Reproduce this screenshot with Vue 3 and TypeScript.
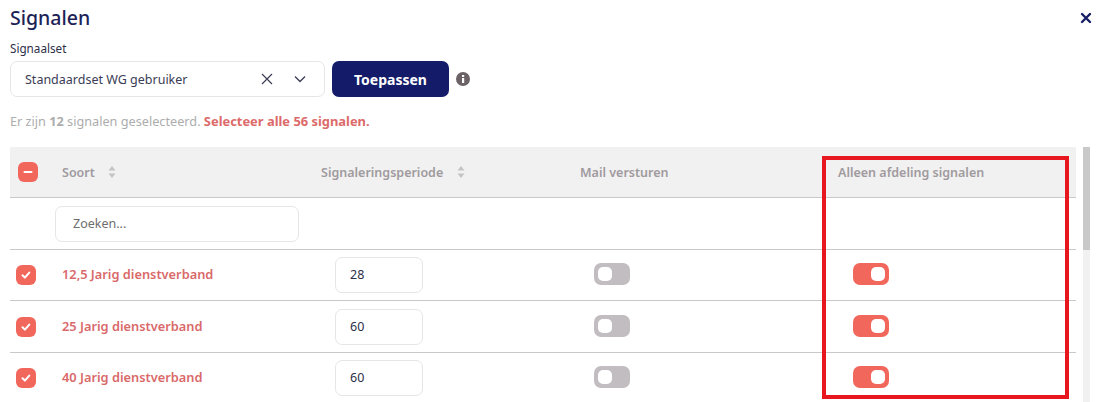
<script setup lang="ts">
interface Row { name: string; days: string }
const rows: Row[] = [
  { name: '12,5 Jarig dienstverband', days: '28' },
  { name: '25 Jarig dienstverband', days: '60' },
  { name: '40 Jarig dienstverband', days: '60' },
]
</script>

<template>
  <div class="page">
    <header class="top">
      <h1>Signalen</h1>
      <svg class="close" width="12" height="12" viewBox="0 0 12 12"><path d="M2 2l8 8M10 2l-8 8" stroke="#161f63" stroke-width="2.4" stroke-linecap="round" /></svg>
    </header>
    <div class="label">Signaalset</div>
    <div class="setrow">
      <div class="select">
        <span class="value">Standaardset WG gebruiker</span>
        <svg class="x" width="12" height="12" viewBox="0 0 12 12"><path d="M1 1l10 10M11 1L1 11" stroke="#3a3d55" stroke-width="1.2" /></svg>
        <svg class="chev" width="12" height="8" viewBox="0 0 12 8"><path d="M1 1.5l5 5 5-5" fill="none" stroke="#3a3d55" stroke-width="1.3" /></svg>
      </div>
      <button class="apply">Toepassen</button>
      <svg class="info" width="14" height="14" viewBox="0 0 14 14"><circle cx="7" cy="7" r="7" fill="#6b6266" /><rect x="6" y="6" width="2.2" height="5" fill="#fff" /><rect x="6" y="3" width="2.2" height="2" fill="#fff" /></svg>
    </div>
    <p class="count">Er zijn <b>12</b> signalen geselecteerd. <a>Selecteer alle 56 signalen.</a></p>

    <div class="tablewrap">
      <div class="table">
        <div class="row head">
          <div class="c0"><span class="check"><svg width="12" height="12" viewBox="0 0 12 12"><path d="M2.5 6h7" stroke="#fff" stroke-width="2" stroke-linecap="round" /></svg></span></div>
          <div class="c1">Soort <svg class="sort" width="8" height="12" viewBox="0 0 8 12"><path d="M4 0l3.5 4.5h-7zM4 12L.5 7.5h7z" fill="#c4c4c4" /></svg></div>
          <div class="c2">Signaleringsperiode <svg class="sort" width="8" height="12" viewBox="0 0 8 12"><path d="M4 0l3.5 4.5h-7zM4 12L.5 7.5h7z" fill="#c4c4c4" /></svg></div>
          <div class="c3">Mail versturen</div>
          <div class="c4">Alleen afdeling signalen</div>
        </div>
        <div class="row search">
          <div class="c0"></div>
          <div class="searchbox">Zoeken...</div>
        </div>
        <div v-for="r in rows" :key="r.name" class="row item">
          <div class="c0"><span class="check"><svg width="12" height="12" viewBox="0 0 12 12"><path d="M2.5 6.2l2.4 2.4 4.4-5" fill="none" stroke="#fff" stroke-width="2" stroke-linecap="round" stroke-linejoin="round" /></svg></span></div>
          <div class="c1 name">{{ r.name }}</div>
          <div class="c2"><div class="num">{{ r.days }}</div></div>
          <div class="c3"><span class="toggle off"><i></i></span></div>
          <div class="c4"><span class="toggle on"><i></i></span></div>
        </div>
      </div>
      <div class="scroll"><div class="thumb"></div></div>
    </div>
    <div class="mark"></div>
  </div>
</template>

<style scoped>
.page {
  position: relative;
  width: 1097px;
  height: 402px;
  overflow: hidden;
  box-sizing: border-box;
  padding: 0 7px 0 10px;
  background: #fff;
  font-family: "Noto Sans", sans-serif;
  color: #161f63;
}
.top { display: flex; justify-content: space-between; align-items: center; height: 36px; margin-right: -2px; }
h1 { margin: 0; font-size: 19.5px; font-weight: 500; line-height: 36px; color: #1b2256; }
.label { font-size: 11.7px; line-height: 16px; margin-top: 4px; color: #2d2f48; }
.setrow { display: flex; align-items: center; margin-top: 5px; }
.select {
  width: 315px; height: 36px; box-sizing: border-box;
  border: 1px solid #e6e6e6; border-radius: 7px;
  display: flex; align-items: center; padding: 0 18px 0 14px;
  font-size: 12.5px; color: #3a3d55;
}
.value { flex: 1; }
.chev { margin-left: 21px; }
.apply {
  margin-left: 7px; width: 117px; height: 36px; border: 0; border-radius: 7px;
  background: #141c69; color: #fff; font: 700 14px "Noto Sans", sans-serif;
}
.info { margin-left: 7px; }
.count { margin: 15px 0 0; font-size: 12.7px; line-height: 18px; color: #adadad; }
.count b { font-weight: 700; }
.count a { font-weight: 700; font-size: 12.9px; color: #dc6a6a; }
.tablewrap { display: flex; margin-top: 17px; }
.table { width: 1066px; flex: none; }
.row { display: grid; grid-template-columns: 45px 255px 260px 258px 248px; align-items: center; border-bottom: 1px solid #c9c9c9; box-sizing: border-box; }
.head { height: 51px; background: #f1f1f1; font-size: 12.5px; font-weight: 600; color: #a09a9e; }
.search { height: 52px; }
.item { height: 51px; }
.item:nth-child(4) { height: 52px; }
.c0 { padding-left: 6px; }
.c1 { padding-left: 7px; }
.c2 { padding-left: 11px; }
.c3 { padding-left: 10px; }
.c4 { padding-left: 10px; }
.sort { margin-left: 10px; vertical-align: -1px; }
.check {
  width: 20px; height: 20px; border-radius: 6px; background: #f2675c;
  display: flex; align-items: center; justify-content: center;
}
.head .check { margin-left: 2px; }
.searchbox {
  width: 244px; height: 36px; box-sizing: border-box;
  border: 1px solid #e6e6e6; border-radius: 7px;
  padding-left: 17px; line-height: 34px; font-size: 12.5px; color: #6e6e6e;
}
.name { font-size: 12.8px; font-weight: 600; color: #d9696a; padding-bottom: 2px; }
.num {
  margin-left: 14px; width: 88px; height: 36px; box-sizing: border-box;
  border: 1px solid #e6e6e6; border-radius: 7px;
  padding-left: 14px; line-height: 34px; font-size: 12.5px; color: #2d2f48;
}
.toggle {
  display: block; width: 36px; height: 22px; border-radius: 7px; box-sizing: border-box; padding: 4px;
  margin-top: -2px;
}
.toggle i { display: block; width: 14px; height: 14px; border-radius: 5px; background: #fff; }
.c3 .toggle { margin-left: 14px; }
.c4 .toggle { margin-left: 15px; }
.off { background: #c2bdc0; }
.on { background: #f2675c; display: flex; justify-content: flex-end; }
.scroll { width: 7px; margin-left: 7px; background: #f1f1f1; height: 260px; }
.thumb { height: 103px; background: #c9c9c9; }
.mark {
  position: absolute; left: 822px; top: 156px; width: 247px; height: 243px;
  box-sizing: border-box; border: 4px solid #e8161f;
}
</style>
